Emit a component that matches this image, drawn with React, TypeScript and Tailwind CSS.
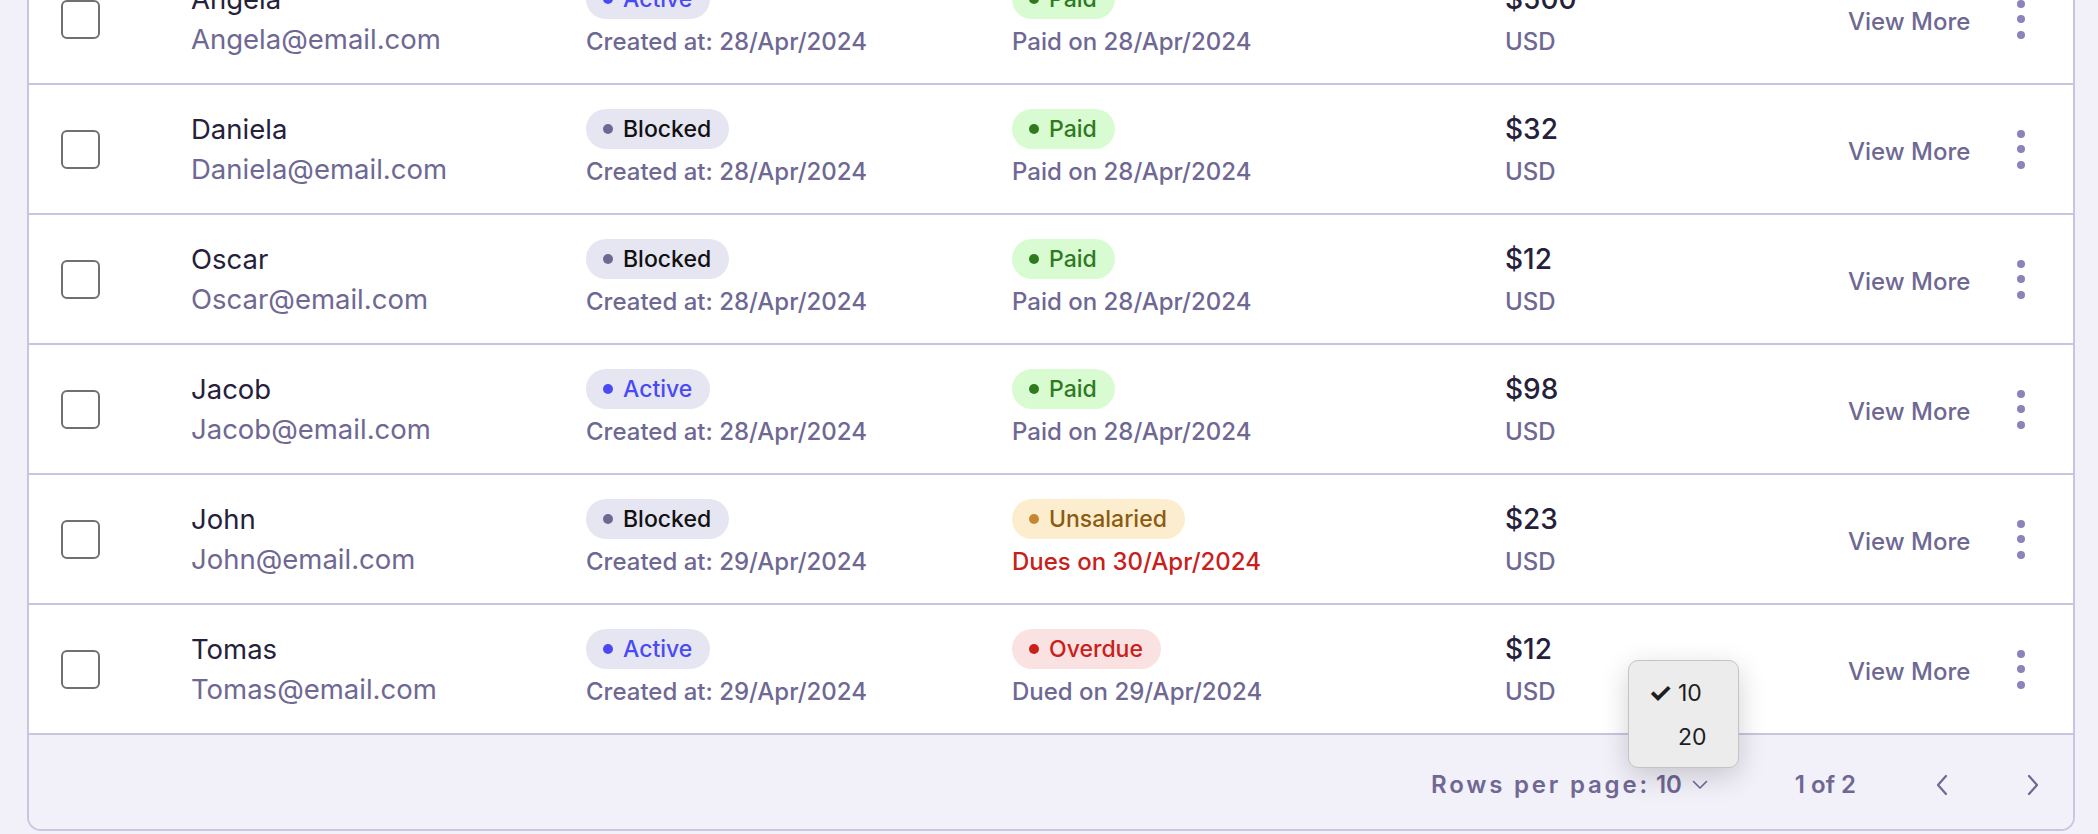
import type { ReactNode } from 'react';

type Tone = 'active' | 'blocked' | 'paid' | 'unsalaried' | 'overdue';

interface Row {
  name: string;
  status: 'active' | 'blocked';
  created: string;
  payment: 'paid' | 'unsalaried' | 'overdue';
  paymentNote: string;
  amount: string;
}

const rows: Row[] = [
  { name: 'Angela', status: 'active', created: '28/Apr/2024', payment: 'paid', paymentNote: 'Paid on 28/Apr/2024', amount: '$500' },
  { name: 'Daniela', status: 'blocked', created: '28/Apr/2024', payment: 'paid', paymentNote: 'Paid on 28/Apr/2024', amount: '$32' },
  { name: 'Oscar', status: 'blocked', created: '28/Apr/2024', payment: 'paid', paymentNote: 'Paid on 28/Apr/2024', amount: '$12' },
  { name: 'Jacob', status: 'active', created: '28/Apr/2024', payment: 'paid', paymentNote: 'Paid on 28/Apr/2024', amount: '$98' },
  { name: 'John', status: 'blocked', created: '29/Apr/2024', payment: 'unsalaried', paymentNote: 'Dues on 30/Apr/2024', amount: '$23' },
  { name: 'Tomas', status: 'active', created: '29/Apr/2024', payment: 'overdue', paymentNote: 'Dued on 29/Apr/2024', amount: '$12' },
];

const badgeStyles: Record<Tone, { box: string; dot: string; label: string }> = {
  active: { box: 'bg-[#E6E6F2] text-[#4A4AF4]', dot: 'bg-[#4A4AF4]', label: 'Active' },
  blocked: { box: 'bg-[#E6E6F2] text-[#111111]', dot: 'bg-[#6E6893]', label: 'Blocked' },
  paid: { box: 'bg-[#D9FBD2] text-[#2F7A1F]', dot: 'bg-[#2F7A1F]', label: 'Paid' },
  unsalaried: { box: 'bg-[#FDEDCF] text-[#8C5B10]', dot: 'bg-[#C6882E]', label: 'Unsalaried' },
  overdue: { box: 'bg-[#FBE2E2] text-[#C8201A]', dot: 'bg-[#C8201A]', label: 'Overdue' },
};

function Badge({ tone }: { tone: Tone }) {
  const s = badgeStyles[tone];
  return (
    <span className={`inline-flex h-[40px] items-center gap-[10px] self-start whitespace-nowrap rounded-full pl-[17px] pr-[18px] text-[23px] font-medium ${s.box}`}>
      <span className={`h-[10px] w-[10px] rounded-full ${s.dot}`} />
      {s.label}
    </span>
  );
}

function Cell({ width, children }: { width: string; children: ReactNode }) {
  return <div className={`flex shrink-0 flex-col ${width}`}>{children}</div>;
}

function Chevron({ dir }: { dir: 'left' | 'right' }) {
  return (
    <svg width="14" height="22" viewBox="0 0 14 22" fill="none">
      <polyline
        points={dir === 'left' ? '11,2 3,11 11,20' : '3,2 11,11 3,20'}
        stroke="#6E6893"
        strokeWidth="2.2"
        strokeLinecap="round"
        strokeLinejoin="round"
      />
    </svg>
  );
}

export default function App() {
  return (
    <div className="relative h-[834px] overflow-hidden bg-[#F2F0F9] font-['Inter',sans-serif]">
      <div className="ml-[27px] -mt-[45px] w-[2048px] overflow-hidden rounded-b-[14px] border-x-2 border-b-2 border-[#C9C5E0] bg-white">
        {rows.map((row) => (
          <div key={row.name} className="flex h-[130px] items-center border-b-2 border-[#C9C5E0] pl-[32px]">
            <div className="h-[39px] w-[39px] shrink-0 rounded-[6px] border-2 border-[#707070]" />
            <div className="ml-[91px] flex w-[395px] shrink-0 flex-col text-[27.5px] leading-[40px]">
              <span className="text-[#25213B]">{row.name}</span>
              <span className="text-[#6E6893]">{row.name}@email.com</span>
            </div>
            <Cell width="w-[426px]">
              <Badge tone={row.status} />
              <span className="mt-[6px] whitespace-nowrap text-[24px] font-medium leading-[34px] text-[#6E6893]">
                Created at: {row.created}
              </span>
            </Cell>
            <Cell width="w-[493px]">
              <Badge tone={row.payment} />
              <span
                className={
                  row.payment === 'unsalaried'
                    ? 'mt-[6px] whitespace-nowrap text-[24px] font-medium leading-[34px] text-[#C8201A]'
                    : 'mt-[6px] whitespace-nowrap text-[24px] font-medium leading-[34px] text-[#6E6893]'
                }
              >
                {row.paymentNote}
              </span>
            </Cell>
            <Cell width="w-[343px]">
              <span className="text-[28px] font-medium leading-[40px] text-[#25213B]">{row.amount}</span>
              <span className="mt-[6px] text-[24px] font-medium leading-[34px] text-[#6E6893]">USD</span>
            </Cell>
            <span className="w-[169px] shrink-0 whitespace-nowrap pt-[6px] text-[24px] font-medium text-[#6E6893]">View More</span>
            <div className="flex flex-col gap-[7.5px]">
              <span className="h-[8px] w-[8px] rounded-full bg-[#8B83BA]" />
              <span className="h-[8px] w-[8px] rounded-full bg-[#8B83BA]" />
              <span className="h-[8px] w-[8px] rounded-full bg-[#8B83BA]" />
            </div>
          </div>
        ))}

        <div className="flex h-[94px] items-center justify-end bg-[#F2F0F9] pr-[33px] pt-[5px] text-[24px] font-semibold text-[#6E6893]">
          <span className="tracking-[2.8px]">Rows per page:</span>
          <span className="ml-[6px]">10</span>
          <svg className="ml-[10px]" width="16" height="10" viewBox="0 0 16 10" fill="none">
            <polyline points="1.5,1.5 8,8 14.5,1.5" stroke="#6E6893" strokeWidth="1.6" strokeLinecap="round" strokeLinejoin="round" />
          </svg>
          <span className="ml-[87px]">1 of 2</span>
          <span className="ml-[79px]">
            <Chevron dir="left" />
          </span>
          <span className="ml-[77px]">
            <Chevron dir="right" />
          </span>
        </div>
      </div>

      <div className="absolute left-[1628px] top-[660px] flex h-[108px] w-[111px] flex-col rounded-[10px] border border-[#C4C4C4] bg-[#ECECEC] pt-[10px] text-[23px] leading-[44px] text-[#1E1E1E] shadow-[0_8px_28px_rgba(0,0,0,0.18)]">
        <div className="flex items-center">
          <span className="w-[49px] pr-[6px] text-right text-[27px] font-bold">✓</span>
          <span>10</span>
        </div>
        <div className="flex items-center">
          <span className="w-[49px]" />
          <span>20</span>
        </div>
      </div>
    </div>
  );
}
